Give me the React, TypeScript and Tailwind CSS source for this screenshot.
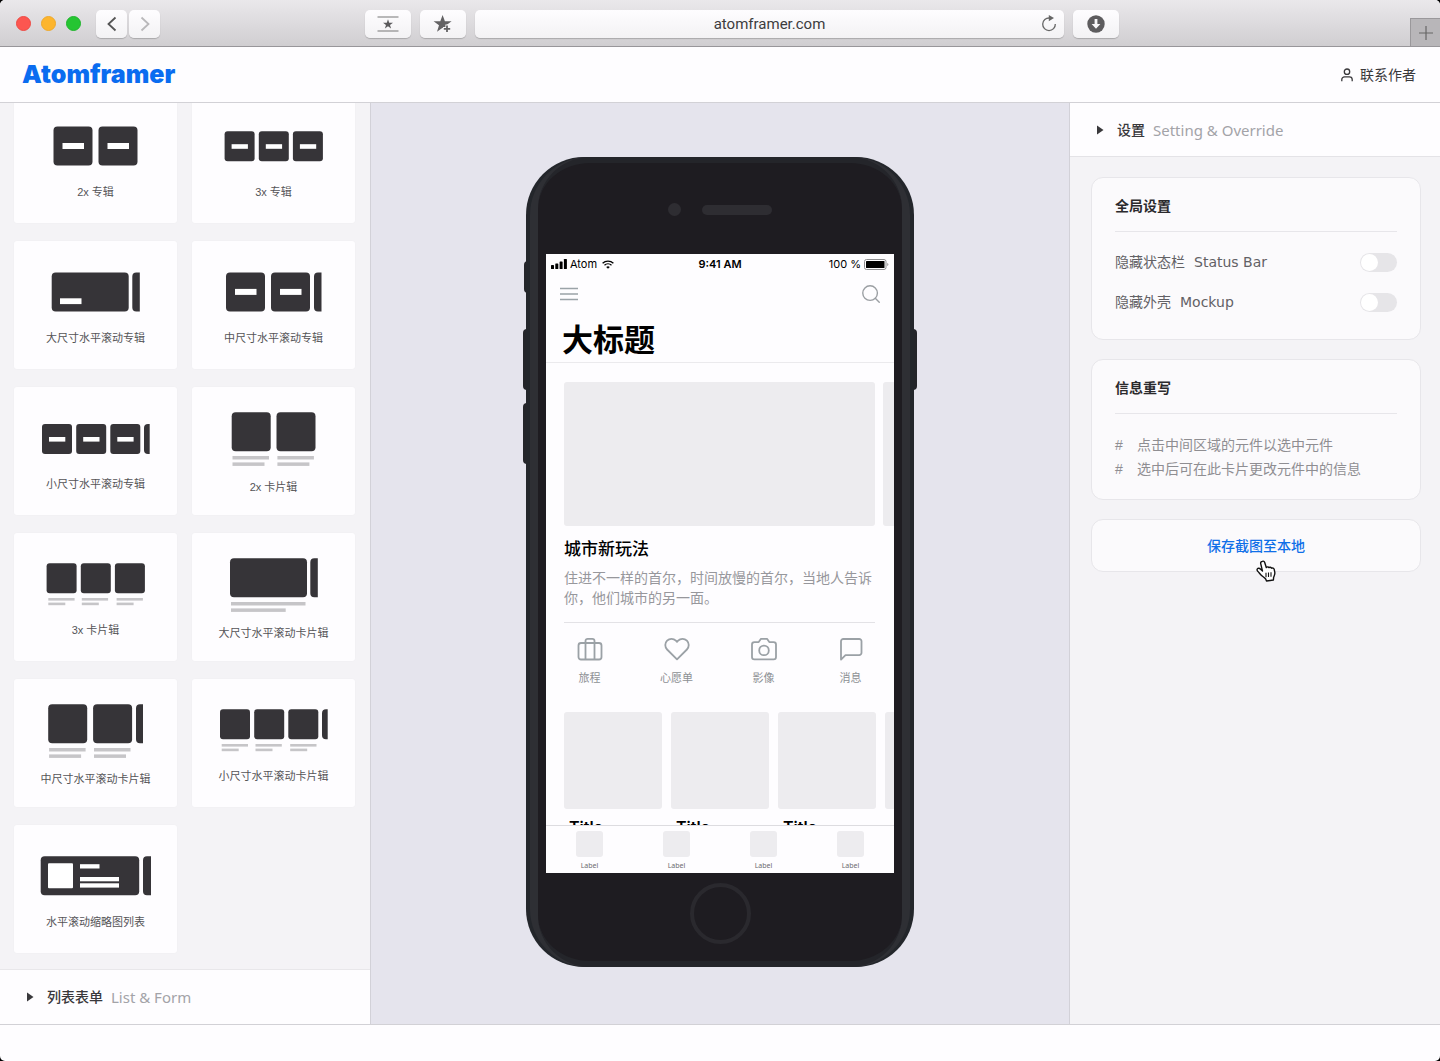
import type { ReactNode } from 'react';
import { Search } from 'lucide-react';

const ink = '#363438';
const muted = '#c6c5c8';

function Tile({ x, y, size = 39, bar = false }: { x: number; y: number; size?: number; bar?: boolean }) {
  const small = size < 39;
  return (
    <g>
      <rect x={x} y={y} width={size} height={size} rx={small ? 3 : 4} fill={ink} />
      {bar && !small && <rect x={x + 9} y={y + 16.5} width={21.5} height={6} fill="#fff" />}
      {bar && small && <rect x={x + 7} y={y + 13} width={16.3} height={4.6} fill="#fff" />}
    </g>
  );
}

// Left slice of the next item, cut off by the screen edge
function Peek({ x, y, w = 7.5, h = 39 }: { x: number; y: number; w?: number; h?: number }) {
  return <path d={`M${x + w} ${y}h${4 - w}a4 4 0 0 0-4 4v${h - 8}a4 4 0 0 0 4 4h${w - 4}z`} fill={ink} />;
}

function Lines({ x, y, w1, w2, thin = false }: { x: number; y: number; w1: number; w2: number; thin?: boolean }) {
  return (
    <g fill={muted}>
      <rect x={x} y={y} width={w1} height={thin ? 2.6 : 3.5} />
      <rect x={x} y={y + (thin ? 4.6 : 6.4)} width={w2} height={thin ? 2.6 : 3.5} />
    </g>
  );
}

interface Widget {
  name: string;
  tall?: boolean;
  art: ReactNode;
}

const widgets: Widget[] = [
  { name: '2x 专辑', art: <><Tile x={18.5} y={6.5} bar /><Tile x={63.5} y={6.5} bar /></> },
  {
    name: '3x 专辑',
    art: <><Tile x={11.6} y={11.2} size={30} bar /><Tile x={45.8} y={11.2} size={30} bar /><Tile x={79.9} y={11.2} size={30} bar /></>,
  },
  {
    name: '大尺寸水平滚动专辑',
    art: (
      <>
        <rect x={16.7} y={6.4} width={77} height={39} rx={4} fill={ink} />
        <rect x={25} y={32.3} width={21.5} height={5.8} fill="#fff" />
        <Peek x={97.3} y={6.4} />
      </>
    ),
  },
  { name: '中尺寸水平滚动专辑', art: <><Tile x={13} y={6.4} bar /><Tile x={58} y={6.4} bar /><Peek x={101} y={6.4} /></> },
  {
    name: '小尺寸水平滚动专辑',
    art: (
      <>
        <Tile x={7} y={12} size={30} bar />
        <Tile x={41.2} y={12} size={30} bar />
        <Tile x={75.3} y={12} size={30} bar />
        <Peek x={109} y={12} w={5.7} h={30} />
      </>
    ),
  },
  {
    name: '2x 卡片辑',
    tall: true,
    art: (
      <>
        <Tile x={18.7} y={0.2} />
        <Tile x={63.5} y={0.2} />
        <Lines x={19.5} y={44} w1={36.5} w2={32} />
        <Lines x={64.4} y={44} w1={36.5} w2={32} />
      </>
    ),
  },
  {
    name: '3x 卡片辑',
    art: (
      <>
        <Tile x={11.6} y={5.3} size={30} />
        <Tile x={45.8} y={5.3} size={30} />
        <Tile x={79.9} y={5.3} size={30} />
        <Lines x={13.3} y={40} w1={26.3} w2={17} thin />
        <Lines x={46.8} y={40} w1={26.3} w2={17} thin />
        <Lines x={81.6} y={40} w1={26.3} w2={17} thin />
      </>
    ),
  },
  {
    name: '大尺寸水平滚动卡片辑',
    tall: true,
    art: (
      <>
        <rect x={17} y={0.2} width={77} height={39} rx={4} fill={ink} />
        <Peek x={97.3} y={0.2} />
        <Lines x={18} y={44} w1={74.5} w2={54.7} />
      </>
    ),
  },
  {
    name: '中尺寸水平滚动卡片辑',
    tall: true,
    art: (
      <>
        <Tile x={13.2} y={0.2} />
        <Tile x={58.1} y={0.2} />
        <Peek x={101} y={0.2} w={7} />
        <Lines x={14.1} y={44} w1={36.5} w2={32} />
        <Lines x={59} y={44} w1={36.5} w2={32} />
      </>
    ),
  },
  {
    name: '小尺寸水平滚动卡片辑',
    art: (
      <>
        <Tile x={7} y={5.2} size={30} />
        <Tile x={41.2} y={5.2} size={30} />
        <Tile x={75.3} y={5.2} size={30} />
        <Peek x={109} y={5.2} w={5.7} h={30} />
        <Lines x={8.7} y={40} w1={26.3} w2={17} thin />
        <Lines x={42.5} y={40} w1={26.3} w2={17} thin />
        <Lines x={77.2} y={40} w1={26.3} w2={17} thin />
      </>
    ),
  },
  {
    name: '水平滚动缩略图列表',
    art: (
      <>
        <rect x={5.7} y={6.2} width={98.5} height={39} rx={4} fill={ink} />
        <rect x={13} y={13.3} width={25} height={25} rx={1} fill="#fff" />
        <rect x={45} y={14.2} width={19.5} height={4.3} fill="#fff" />
        <rect x={45} y={27} width={39} height={4.3} fill="#fff" />
        <rect x={45} y={33.3} width={39} height={4.3} fill="#fff" />
        <Peek x={108} y={6.2} w={8} />
      </>
    ),
  },
];

const toolButton =
  'flex h-7 items-center justify-center rounded-[5px] bg-gradient-to-b from-[#fefdff] to-[#f3f2f4] shadow-[0_1px_1px_rgba(0,0,0,0.2)]';

function BrowserBar() {
  return (
    <div className="relative flex h-[47px] shrink-0 items-center border-b border-[#98969a] bg-gradient-to-b from-[#eae8eb] to-[#d0ced1] pl-4 pt-px">
      <div className="flex gap-[10px]">
        <span className="size-[15px] rounded-full border border-[#ee4a44] bg-[#fc5650]" />
        <span className="size-[15px] rounded-full border border-[#eea92c] bg-[#fdb52d]" />
        <span className="size-[15px] rounded-full border border-[#1fb52c] bg-[#25c532]" />
      </div>
      <div className="ml-[15px] flex gap-0.5">
        <button className={`${toolButton} w-[31px]`} aria-label="Back">
          <svg width="12" height="18" viewBox="0 0 12 18" fill="none" stroke="#555" strokeWidth="1.8"><path d="M9.5 2.5 2.5 9l7 6.5" /></svg>
        </button>
        <button className={`${toolButton} w-[31px]`} aria-label="Forward">
          <svg width="12" height="18" viewBox="0 0 12 18" fill="none" stroke="#b9b8ba" strokeWidth="1.8"><path d="m2.5 2.5 7 6.5-7 6.5" /></svg>
        </button>
      </div>
      <div className="ml-[205px] flex flex-1 gap-[9px]">
        <button className={`${toolButton} w-[46px]`} aria-label="Top sites">
          <svg width="22" height="16" viewBox="0 0 22 16">
            <path d="M.5 1h21M.5 15h21" stroke="#777" strokeWidth="1.2" />
            <path d="m11 3.2 1.2 3.5H16l-3 2.200 1.100 3.600-3.100-2.200-3.100 2.200L9 8.900 6 6.700h3.800z" fill="#5b5a5c" />
          </svg>
        </button>
        <button className={`${toolButton} w-[46px]`} aria-label="Add bookmark">
          <svg width="20" height="20" viewBox="0 0 20 20">
            <path d="m9.6 1 2.3 6.3h6.700l-5.400 4 2 6.500-5.600-4-5.600 4 2-6.500-5.400-4h6.700z" fill="#636264" />
            <path d="M14 10.500v8M10 14.500h8" stroke="#f8f7f9" strokeWidth="3.200" />
            <path d="M14 11.500v6.500M10.800 14.800h6.400" stroke="#636264" strokeWidth="1.800" />
          </svg>
        </button>
        <div className="relative flex flex-1">
          <input
            className={`${toolButton} w-full text-center font-[Roboto,sans-serif] text-[15px] text-[#3d3c3e] outline-none`}
            aria-label="Address"
            defaultValue="atomframer.com"
          />
          <button className="absolute right-[7px] top-[5px]" aria-label="Reload">
            <svg width="16" height="17" viewBox="0 0 16 17" fill="none" stroke="#666" strokeWidth="1.3">
              <path d="M8.500 3A6.300 6.300 0 1 0 14.300 9" />
              <path d="m7.800 0 5.200 3-5.200 3.200z" fill="#666" stroke="none" />
            </svg>
          </button>
        </div>
        <button className={`${toolButton} w-[46px]`} aria-label="Downloads">
          <svg width="18" height="18" viewBox="0 0 18 18">
            <circle cx="9" cy="9" r="8.700" fill="#5d5c5e" />
            <path d="M7.600 4h2.800v5h3L9 13.800 4.600 9h3z" fill="#f8f7f9" />
          </svg>
        </button>
      </div>
      <button className="ml-[291px] flex h-7 w-[30px] items-center justify-center self-end border-l border-t border-[#9a989b] bg-[#b8b6b9]" aria-label="New tab">
        <svg width="14" height="14" viewBox="0 0 14 14" stroke="#666" strokeWidth="1.2"><path d="M7 0v14M0 7h14" /></svg>
      </button>
    </div>
  );
}

function SectionHead({ title, sub }: { title: string; sub: string }) {
  return (
    <button className="flex w-full items-center text-left text-sm">
      <svg width="7" height="10" viewBox="0 0 7 10" fill="#3a393c"><path d="M0 .5 6.500 5 0 9.500z" /></svg>
      <span className="ml-[13px] font-medium text-[#39383b]">{title}</span>
      <span className="ml-2 font-[Noto_Sans,sans-serif] text-[15px] leading-5 text-[#a3a3a8]">{sub}</span>
    </button>
  );
}

function Library() {
  return (
    <aside className="flex w-[371px] shrink-0 flex-col border-r border-[#d2d1d8] bg-[#f4f3f6]">
      <div className="flex min-h-0 flex-1 flex-col justify-end overflow-hidden border-b border-[#e8e7ea] pb-4">
        <div className="grid grid-cols-2 gap-x-[15px] gap-y-[18px] pl-[14px] pr-[15px]">
          {widgets.map((w) => (
            <button key={w.name} className="flex h-32 flex-col items-center rounded-[3px] bg-[#fefdff] pt-[25px] shadow-[0_0_2px_rgba(0,0,0,0.03)]">
              <svg width="121" height={w.tall ? 67 : 64} viewBox={w.tall ? '0 0 121 67' : '0 0 121 64'}>
                {w.art}
              </svg>
              <span className="text-[11px] leading-4 text-[#555457]">{w.name}</span>
            </button>
          ))}
        </div>
      </div>
      <div className="flex h-[54px] items-center bg-[#fefdff] pl-[27px]">
        <SectionHead title="列表表单" sub="List & Form" />
      </div>
    </aside>
  );
}

const shortcuts = [
  {
    name: '旅程',
    icon: <><rect x="1.500" y="6" width="23" height="16.500" rx="2.500" /><path d="M8.500 22.500V4A2.200 2.200 0 0 1 10.700 1.800h4.600A2.200 2.200 0 0 1 17.500 4v18.500" /></>,
  },
  {
    name: '心愿单',
    icon: <path d="M22.900 3.700a6.200 6.200 0 0 0-8.800 0L13 4.900l-1.100-1.200a6.200 6.200 0 0 0-8.800 8.800L13 22.400l9.900-9.900a6.200 6.200 0 0 0 0-8.800z" />,
  },
  {
    name: '影像',
    icon: <><path d="M25 20a2.400 2.400 0 0 1-2.400 2.400H3.400A2.400 2.400 0 0 1 1 20V7.500a2.400 2.400 0 0 1 2.400-2.400h4.300L10 1.800h6l2.300 3.300h4.300A2.400 2.400 0 0 1 25 7.500z" /><circle cx="13" cy="13.400" r="4.800" /></>,
  },
  {
    name: '消息',
    icon: <path d="M23.500 15.800a2.300 2.300 0 0 1-2.300 2.300H7.500L3 22.600V4.300A2.300 2.300 0 0 1 5.300 2h15.900a2.300 2.300 0 0 1 2.300 2.300z" />,
  },
];

function StatusBar() {
  return (
    <div className="grid h-5 grid-cols-3 items-center px-[5px] font-[Inter,sans-serif] text-[11px] leading-5 text-black">
      <div className="flex items-center gap-[3px]">
        <svg width="16" height="10" viewBox="0 0 16 10">
          <rect x="0" y="6" width="3" height="4" rx=".6" /><rect x="4.300" y="4.500" width="3" height="5.500" rx=".6" />
          <rect x="8.600" y="2.500" width="3" height="7.500" rx=".6" /><rect x="12.900" y="0" width="3" height="10" rx=".6" />
        </svg>
        Atom
        <svg className="ml-0.5" width="12" height="9" viewBox="0 0 12 9" fill="none" stroke="#000" strokeWidth="1.300">
          <path d="M.6 3.200a7.800 7.800 0 0 1 10.800 0M2.500 5.300a5 5 0 0 1 7 0" />
          <path d="M4.200 7a2.600 2.600 0 0 1 3.600 0L6 8.800z" fill="#000" stroke="none" />
        </svg>
      </div>
      <div className="text-center font-semibold">9:41 AM</div>
      <div className="flex items-center justify-end gap-[3px]">
        100 %
        <svg width="25" height="11" viewBox="0 0 25 11">
          <rect x=".5" y=".5" width="21.500" height="10" rx="2" fill="none" stroke="#8d8d8f" />
          <rect x="2" y="2" width="18.500" height="7" rx=".6" />
          <path d="M23.300 4v3q1-.4 1-1.500t-1-1.500z" fill="#8d8d8f" />
        </svg>
      </div>
    </div>
  );
}

function Screen() {
  return (
    <div className="flex h-[619px] flex-col overflow-hidden bg-[#fefdff]">
      <StatusBar />
      <header className="border-b border-[#ebeaed]">
        <div className="flex h-10 items-center justify-between pl-[14px] pr-3">
          <button aria-label="Menu">
            <svg width="18" height="14" viewBox="0 0 18 14" stroke="#9ba3a8" strokeWidth="1.400"><path d="M0 1.500h18M0 7h18M0 12.500h18" /></svg>
          </button>
          <button aria-label="Search"><Search className="size-[22px] text-[#9b9fa3]" strokeWidth={1.5} /></button>
        </div>
        <h1 className="h-12 pl-4 text-[31px] font-bold leading-[54px] text-black">大标题</h1>
      </header>
      <main className="min-h-0 flex-1 overflow-hidden pl-[18px]">
        <div className="flex gap-2 pt-[19px]">
          <div className="h-36 w-[311px] shrink-0 rounded-[3px] bg-[#edecef]" />
          <div className="h-36 w-[311px] shrink-0 rounded-[3px] bg-[#edecef]" />
        </div>
        <div className="mr-[19px] border-b border-[#e3e2e6] pb-[14px]">
          <h2 className="mt-3 text-[17px] font-medium leading-6 text-black">城市新玩法</h2>
          <p className="mt-1.5 text-sm leading-5 text-[#97979c]">住进不一样的首尔，时间放慢的首尔，当地人告诉你，他们城市的另一面。</p>
        </div>
        <div className="-ml-[18px] grid grid-cols-4 pt-[14px]">
          {shortcuts.map((s) => (
            <button key={s.name} className="flex flex-col items-center">
              <svg width="26" height="24" viewBox="0 0 26 24" fill="none" stroke="#9ba1a6" strokeWidth="1.800" strokeLinejoin="round">{s.icon}</svg>
              <span className="mt-[9px] text-[11px] leading-4 text-[#8d9094]">{s.name}</span>
            </button>
          ))}
        </div>
        <div className="flex gap-[9px] pt-[26px]">
          {[0, 1, 2, 3].map((i) => (
            <div key={i} className="w-[98px] shrink-0">
              <div className="h-[97px] rounded-[3px] bg-[#edecef]" />
              {i < 3 && <h3 className="pl-[5px] pt-1.5 font-[Inter,sans-serif] text-base font-semibold leading-6 text-black">Title</h3>}
            </div>
          ))}
        </div>
      </main>
      <nav className="grid h-12 shrink-0 grid-cols-4 border-t border-[#dddce0] pt-[5px]">
        {[0, 1, 2, 3].map((i) => (
          <button key={i} className="flex flex-col items-center">
            <span className="h-[26px] w-[27px] rounded-[3px] bg-[#edecef]" />
            <span className="mt-1 font-[Noto_Sans,sans-serif] text-[7px] leading-[10px] text-[#6d6c70]">Label</span>
          </button>
        ))}
      </nav>
    </div>
  );
}

function Phone() {
  return (
    <div className="relative w-[388px]">
      {/* Side keys */}
      <span className="absolute -left-[2px] top-[104px] h-8 w-2 rounded-sm bg-[#24252a]" />
      <span className="absolute -left-[3px] top-[172px] h-[61px] w-2 rounded-sm bg-[#24252a]" />
      <span className="absolute -left-[3px] top-[246px] h-[61px] w-2 rounded-sm bg-[#24252a]" />
      <span className="absolute -right-[3px] top-[172px] h-[61px] w-2 rounded-sm bg-[#24252a]" />
      <div className="relative rounded-[58px] bg-[#23262b] px-1">
        <div className="rounded-[58px] bg-[#2e2f34] px-2">
          <div className="rounded-[52px] border-y-[6px] border-[#24252a] bg-[#1e1c21] px-2 pb-[17px] pt-10">
            <div className="mb-[38px] ml-[122px] flex items-center gap-[21px]">
              <span className="size-[13px] rounded-full bg-[#2e2d32]" />
              <span className="h-[10px] w-[70px] rounded-full bg-[#2e2d32]" />
            </div>
            <Screen />
            <div className="mx-auto mt-[10px] size-[61px] rounded-full border-4 border-[#2a292e]" />
          </div>
        </div>
      </div>
    </div>
  );
}

function Panel({ title, children }: { title: string; children: ReactNode }) {
  return (
    <section className="rounded-xl border border-[#e7e6ea] bg-[#fbfafc] px-[23px] pt-[18px]">
      <h2 className="border-b border-[#e7e6ea] pb-[15px] text-sm font-bold leading-5 text-[#2b2a2d]">{title}</h2>
      {children}
    </section>
  );
}

function Toggle({ zh, en }: { zh: string; en: string }) {
  return (
    <label className="flex h-10 items-center text-sm text-[#626165]">
      {zh}
      <span className="ml-[9px] font-[DejaVu_Sans,sans-serif]">{en}</span>
      <input
        type="checkbox"
        role="switch"
        className="ml-auto h-[19px] w-[37px] appearance-none rounded-full bg-[#e6e5e8] p-px before:block before:size-[17px] before:rounded-full before:bg-white checked:bg-[#0a6cf0] checked:before:ml-[18px]"
      />
    </label>
  );
}

function Cursor() {
  return (
    <svg className="pointer-events-none absolute left-[165px] top-[41px]" width="20" height="22" viewBox="0 0 20 22">
      <path
        d="M6.500 1.200c1-.3 1.900.3 2.200 1.300l1.600 5c.6-.9 2.100-.8 2.600.1.800-.7 2.200-.4 2.600.6 1.100-.5 2.400.1 2.700 1.200l.6 3c.4 2-.7 3.500-1.200 5l-.2 2.600-6.900 1-.8-2C8.300 17.300 6.400 16.500 5 15c-1.300-1.400-2.300-2.900-3.500-4-.8-.9-.5-2.200.4-2.600 1.100-.4 2.200.3 3 1.100l1.600 1.600-1.800-7.500c-.3-1.200.6-2.100 1.800-2.400z"
        fill="#fff" stroke="#111" strokeWidth="1.400" strokeLinejoin="round"
      />
      <path d="M10 12.800v4.500M12.500 12.500v4.600M15 12.300v4.500" stroke="#111" strokeWidth="1.100" />
    </svg>
  );
}

function Settings() {
  return (
    <aside className="w-[371px] shrink-0 border-l border-[#d2d1d8] bg-[#f4f3f6]">
      <div className="flex h-[54px] items-center border-b border-[#e4e3e7] bg-[#fefdff] pl-[27px]">
        <SectionHead title="设置" sub="Setting & Override" />
      </div>
      <div className="flex flex-col gap-[19px] pl-[21px] pr-[19px] pt-5">
        <Panel title="全局设置">
          <div className="pb-[17px] pt-[10px]">
            <Toggle zh="隐藏状态栏" en="Status Bar" />
            <Toggle zh="隐藏外壳" en="Mockup" />
          </div>
        </Panel>
        <Panel title="信息重写">
          <ul className="pb-[18px] pt-[19px] text-sm leading-6 text-[#8f8e92]">
            <li className="flex gap-3"><span className="w-[10px]">#</span>点击中间区域的元件以选中元件</li>
            <li className="flex gap-3"><span className="w-[10px]">#</span>选中后可在此卡片更改元件中的信息</li>
          </ul>
        </Panel>
        <div className="relative">
          <button className="h-[53px] w-full rounded-xl border border-[#e7e6ea] bg-[#fbfafc] text-sm font-medium text-[#0f6fe8]">保存截图至本地</button>
          <Cursor />
        </div>
      </div>
    </aside>
  );
}

export default function App() {
  return (
    <div className="bg-black">
      <div className="flex h-screen flex-col overflow-hidden rounded-[5px] bg-[#fefdff] font-[Liberation_Sans,Noto_Sans_CJK_SC,sans-serif]">
        <BrowserBar />
        <header className="flex h-14 shrink-0 items-center justify-between border-b border-[#d2d1d6] pl-[22px] pr-6">
          <a href="#" className="font-[Inter,sans-serif] text-[25px] font-black text-[#0a6cf0]">Atomframer</a>
          <a href="#" className="flex items-center gap-[7px] text-sm text-[#39383b]">
            <svg width="12" height="14" viewBox="0 0 12 14" fill="none" stroke="#39383b" strokeWidth="1.300">
              <circle cx="6" cy="3.700" r="2.700" /><path d="M.8 13.200v-1.700a2.700 2.700 0 0 1 2.700-2.700h5a2.700 2.700 0 0 1 2.700 2.700v1.700" />
            </svg>
            联系作者
          </a>
        </header>
        <div className="flex min-h-0 flex-1 border-b border-[#d2d1d6]">
          <Library />
          <main className="flex min-w-0 flex-1 items-start justify-center overflow-hidden bg-[#e5e4ed] pt-[54px]">
            <Phone />
          </main>
          <Settings />
        </div>
        <footer className="h-9 shrink-0" />
      </div>
    </div>
  );
}
